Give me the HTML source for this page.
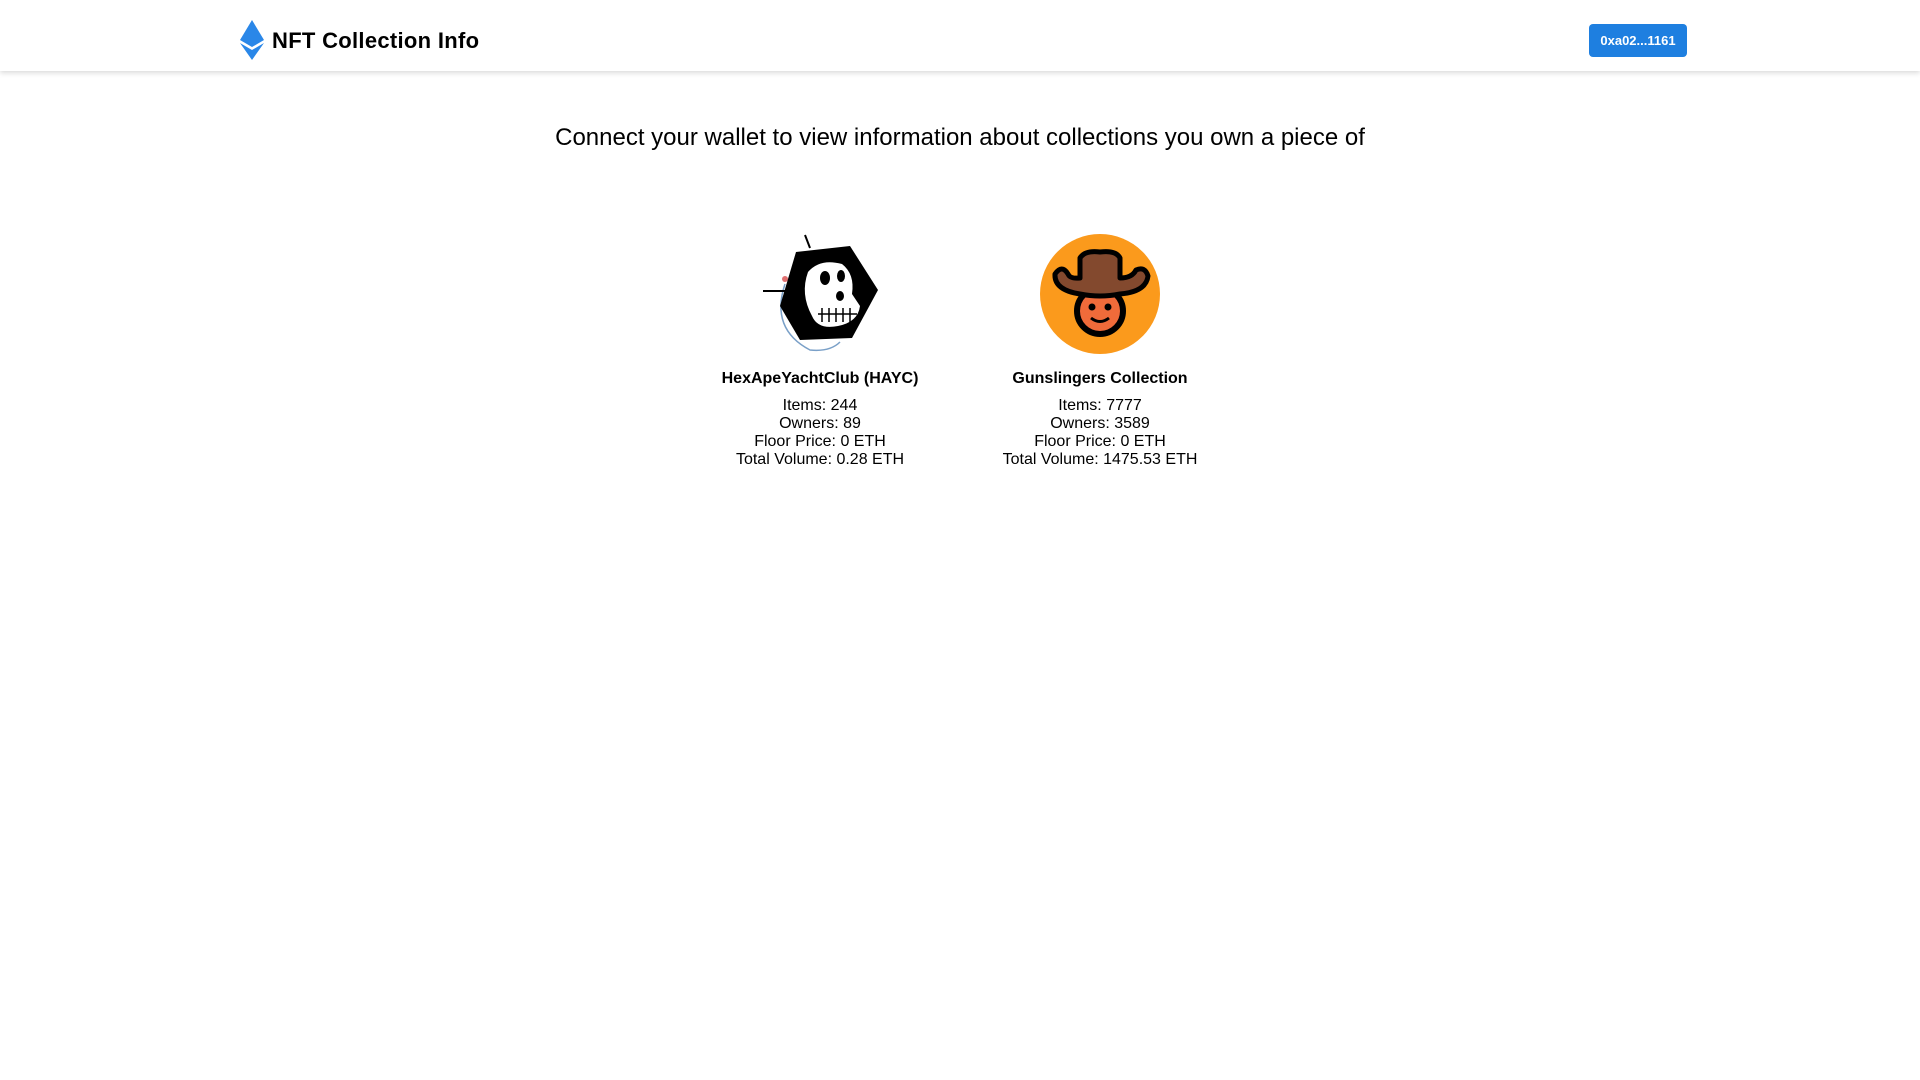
<!DOCTYPE html>
<html><head><meta charset="utf-8"><style>
body{margin:0;width:1920px;height:1080px;background:#fff;font-family:"Liberation Sans",Arial,sans-serif;color:#000;position:relative;overflow:hidden}
.hdr{position:absolute;left:0;top:0;width:1920px;height:71px;background:#fff;box-shadow:0 2px 5px rgba(0,0,0,.15)}
.title{position:absolute;left:272px;top:27px;font-size:22px;font-weight:bold;line-height:28px;letter-spacing:.3px}
.btn{position:absolute;left:1589px;top:24px;width:98px;height:33px;background:#1e7fe0;border-radius:4px;color:#fff;font-size:13px;font-weight:bold;text-align:center;line-height:33px}
h1{position:absolute;left:0;width:1920px;top:123px;margin:0;text-align:center;font-weight:normal;font-size:24px;line-height:30px}
.card{position:absolute;top:234px;width:260px;text-align:center}
.card .name{font-weight:bold;font-size:16px;margin-top:10px;line-height:20px}
.card .info{font-size:16px;line-height:18px;margin-top:8px}
</style></head><body>
<div class="hdr">
<svg style="position:absolute;left:240px;top:20px" width="24" height="40" viewBox="0 0 24 40">
<polygon points="12,0 24,20 12,27 0,20" fill="#2a87e8"/>
<polygon points="0,23 12,30 24,23 12,40" fill="#2a87e8"/>
</svg>
<div class="title">NFT Collection Info</div>
<div class="btn">0xa02...1161</div>
</div>
<h1>Connect your wallet to view information about collections you own a piece of</h1>
<div class="card" style="left:690px">
<svg width="120" height="120" viewBox="0 0 120 120">
<path d="M25 50 Q10 95 50 116 Q70 118 80 108" fill="none" stroke="#7aa0c8" stroke-width="1.5"/>
<path d="M3 57 H38 M50 14 L45 1" stroke="#000" stroke-width="2"/>
<circle cx="25" cy="45" r="3" fill="#e07070"/>
<polygon points="36,18 90,12 118,56 92,104 40,106 20,72 36,18" fill="#000"/>
<path d="M48 38 Q60 24 82 30 Q95 40 92 60 L100 72 Q98 88 78 92 Q58 96 52 82 Q40 60 48 38Z" fill="#fff"/>
<ellipse cx="65" cy="44" rx="5" ry="7" fill="#000"/>
<ellipse cx="81" cy="42" rx="4" ry="6" fill="#000"/>
<ellipse cx="80" cy="62" rx="4" ry="5" fill="#000"/>
<path d="M58 80 H97 M62 74 V88 M69 74 V88 M76 74 V88 M83 74 V88 M90 74 V88" stroke="#000" stroke-width="1.5"/>
</svg>
<div class="name">HexApeYachtClub (HAYC)</div>
<div class="info">Items: 244<br>Owners: 89<br>Floor Price: 0 ETH<br>Total Volume: 0.28 ETH</div>
</div>
<div class="card" style="left:970px">
<svg width="120" height="120" viewBox="0 0 120 120">
<circle cx="60" cy="60" r="60" fill="#fb9a1c"/>
<circle cx="60" cy="77" r="23" fill="#f06b3a" stroke="#000" stroke-width="6"/>
<circle cx="52" cy="73" r="3.5" fill="#000"/><circle cx="68" cy="73" r="3.5" fill="#000"/>
<path d="M51 84 Q60 91 69 84" fill="none" stroke="#000" stroke-width="3"/>
<path d="M15 40 Q22 30 28 40 Q30 45 40 44 L40 24 Q45 16 60 18 Q76 16 80 24 L80 44 Q92 44 96 36 Q105 32 108 42 Q106 58 80 60 Q60 64 40 60 Q14 56 15 40Z" fill="#83492e" stroke="#000" stroke-width="5" stroke-linejoin="round"/>
</svg>
<div class="name">Gunslingers Collection</div>
<div class="info">Items: 7777<br>Owners: 3589<br>Floor Price: 0 ETH<br>Total Volume: 1475.53 ETH</div>
</div>
</body></html>
